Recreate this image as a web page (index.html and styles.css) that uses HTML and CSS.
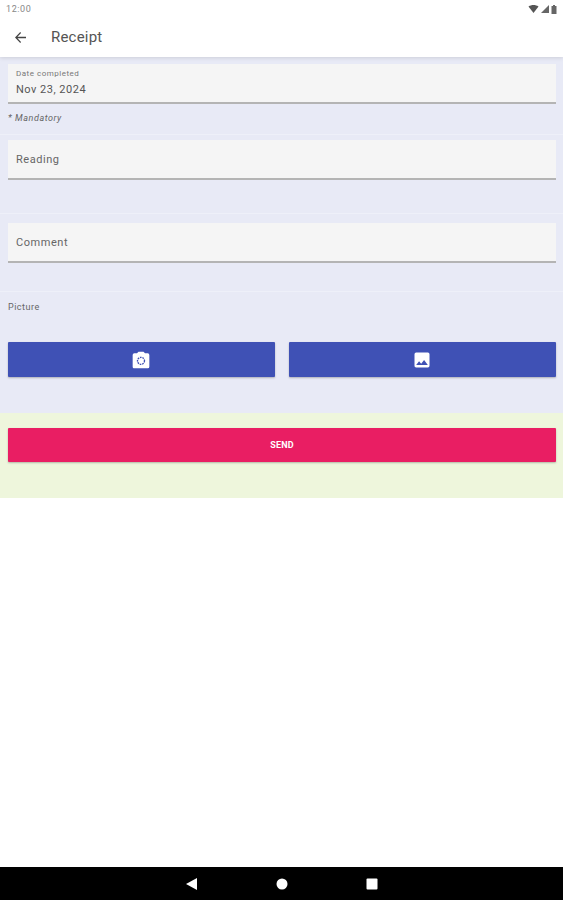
FILE: index.html
```html
<!DOCTYPE html>
<html lang="en">
<head>
<meta charset="utf-8">
<title>Receipt</title>
<link rel="stylesheet" href="styles.css">
</head>
<body>
<div class="screen">
  <header class="header">
    <div class="status">
      <span class="time">12:00</span>
      <span class="status-icons">
        <svg width="11" height="8" viewBox="0 0 10 8"><path d="M0 1.500C3-.5 7-.5 10 1.500L5 8z" fill="#555"/></svg>
        <svg width="8" height="8" viewBox="0 0 8 8"><path d="M0 8L8 0v8z" fill="#666"/></svg>
        <svg width="6" height="9" viewBox="0 0 6 9"><path d="M2 0h2v1h1.500v8h-5V1H2z" fill="#666"/></svg>
      </span>
    </div>
    <div class="appbar">
      <svg class="back" width="11" height="11" viewBox="0 0 12 12"><path d="M12 5.300H2.700L6.600 1 5.700 0 0 6l5.700 6 .9-1-3.900-4.300H12z" fill="#444"/></svg>
      <h1 class="title">Receipt</h1>
    </div>
  </header>
  <main class="form">
    <section class="sec sec-date">
      <div class="field field-date">
        <div class="small-label">Date completed</div>
        <div class="value">Nov 23, 2024</div>
      </div>
      <div class="mandatory">* Mandatory</div>
    </section>
    <section class="sec sec-reading">
      <div class="field field-plain"><span class="label">Reading</span></div>
    </section>
    <section class="sec sec-comment">
      <div class="field field-plain"><span class="label">Comment</span></div>
    </section>
    <section class="sec sec-picture">
      <div class="picture-label">Picture</div>
      <div class="buttons">
        <button class="btn">
          <svg width="20" height="20" viewBox="0 0 24 24"><path d="M9 2 7.170 4H4a2 2 0 0 0-2 2v14c0 1.100.9 2 2 2h16a2 2 0 0 0 2-2V6a2 2 0 0 0-2-2h-3.170L15 2z" fill="#fff"/><circle cx="12" cy="13" r="4.200" fill="none" stroke="#3f51b5" stroke-width="1.600" stroke-dasharray="2 1"/></svg>
        </button>
        <button class="btn">
          <svg width="20" height="20" viewBox="0 0 24 24"><path d="M21 19V5a2 2 0 0 0-2-2H5a2 2 0 0 0-2 2v14c0 1.100.9 2 2 2h14a2 2 0 0 0 2-2zM8.500 13.500l2.500 3 3.500-4.500 4.500 6H5z" fill="#fff"/></svg>
        </button>
      </div>
    </section>
    <section class="send-sec">
      <button class="send">SEND</button>
    </section>
  </main>
  <div class="spacer"></div>
  <nav class="navbar">
    <svg width="12" height="12" viewBox="0 0 12 12"><path d="M11 0v12L0 6z" fill="#fff"/></svg>
    <svg width="12" height="12" viewBox="0 0 12 12"><circle cx="6" cy="6" r="5.500" fill="#fff"/></svg>
    <svg width="12" height="12" viewBox="0 0 12 12"><rect x="0.500" y="0.500" width="11" height="11" rx="1" fill="#fff"/></svg>
  </nav>
</div>
</body>
</html>
```
FILE: styles.css
```css
* { box-sizing: border-box; }
html, body { margin: 0; padding: 0; }
body { background: #fff; font-family: Roboto, "Liberation Sans", sans-serif; }
.screen { width: 563px; height: 900px; display: flex; flex-direction: column; overflow: hidden; }

.header { height: 57px; background: #fff; box-shadow: 0 1px 4px rgba(0,0,0,.12); position: relative; z-index: 1; }
.status { height: 18px; display: flex; justify-content: space-between; align-items: center; padding: 0 6px; }
.time { font-size: 9px; color: #888; letter-spacing: .6px; }
.status-icons { display: flex; align-items: center; gap: 2px; }
.appbar { height: 39px; display: flex; align-items: center; padding-bottom: 1px; }
.back { margin-left: 15px; }
.title { margin: 0 0 0 25px; font-size: 15px; font-weight: 400; color: #555; letter-spacing: .2px; }

.form { display: flex; flex-direction: column; }
.sec { background: #e8eaf6; padding: 0 7px 0 8px; border-bottom: 1px solid #eef0f9; }
.field { background: #f5f5f5; border-bottom: 2px solid #b4b4b4; }
.field-date { height: 40px; padding: 5px 8px 0; }
.small-label { font-size: 8px; line-height: 10px; color: #777; letter-spacing: .5px; }
.value { margin-top: 4px; font-size: 11px; line-height: 13px; color: #555; letter-spacing: .5px; }
.mandatory { margin-top: 9px; font-size: 9px; line-height: 11px; font-style: italic; color: #666; letter-spacing: .55px; }

.sec-date { height: 78px; padding-top: 7px; }
.sec-reading { height: 79px; padding-top: 5px; }
.sec-comment { height: 78px; padding-top: 9px; }
.field-plain { height: 40px; display: flex; align-items: center; padding: 0 8px; }
.label { font-size: 11px; color: #666; letter-spacing: .55px; }

.sec-picture { height: 121px; padding-top: 10px; border-bottom: 0; }
.picture-label { font-size: 9px; line-height: 11px; color: #666; letter-spacing: .5px; }
.buttons { margin-top: 29px; display: flex; gap: 14px; }
.btn { flex: 1; height: 35px; border: 0; border-radius: 1px; padding: 0 2px 0 0; background: #3f51b5; box-shadow: 0 1px 2px rgba(0,0,0,.25); display: flex; align-items: center; justify-content: center; }

.send-sec { height: 85px; background: #eef6dc; padding: 15px 7px 0 8px; }
.send { display: block; width: 100%; height: 34px; border: 0; border-radius: 1px; padding: 0; background: #e91e63; box-shadow: 0 1px 2px rgba(0,0,0,.25); color: #fff; font-family: Roboto, "Liberation Sans", sans-serif; font-size: 9px; font-weight: 700; letter-spacing: .2px; }

.spacer { flex: 1; }
.navbar { height: 33px; background: #000; display: flex; align-items: center; justify-content: center; gap: 78px; padding-left: 1px; }
```
